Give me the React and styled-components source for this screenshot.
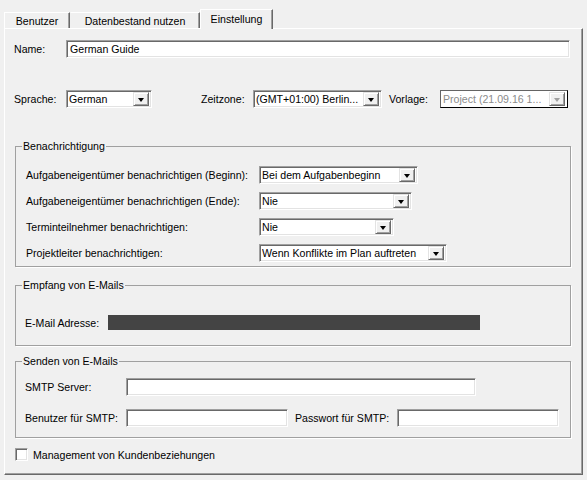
import React from 'react';
import styled, { createGlobalStyle } from 'styled-components';

const GlobalStyle = createGlobalStyle`
  body {
    margin: 0;
    background: #f0f0f0;
    font-family: "Liberation Sans", Arial, sans-serif;
    font-size: 10.6px;
    color: #000;
  }
`;

const Window = styled.div`
  width: 587px;
  height: 480px;
  padding: 9px 0 0 4px;
  box-sizing: border-box;
`;

const TabBar = styled.div`
  display: flex;
  align-items: flex-end;
  height: 19px;
`;

const Tab = styled.div`
  position: relative;
  z-index: 1;
  box-sizing: border-box;
  width: ${p => p.width}px;
  height: ${p => (p.active ? 20 : 16)}px;
  margin-bottom: ${p => (p.active ? -1 : 0)}px;
  padding-top: ${p => (p.active ? 3 : 2)}px;
  text-align: center;
  background: #f0f0f0;
  border-top: 1px solid #fff;
  border-left: 1px solid ${p => (p.active || p.first ? '#fff' : 'transparent')};
  border-right: 1px solid #696969;
  box-shadow: inset -1px 0 #a0a0a0;
  line-height: 13px;
`;

const Panel = styled.div`
  box-sizing: border-box;
  width: 579px;
  height: 447px;
  border-top: 1px solid #fff;
  border-left: 1px solid #fff;
  border-right: 1px solid #696969;
  border-bottom: 1px solid #696969;
  box-shadow: inset -1px -1px #a0a0a0;
  display: flex;
  flex-direction: column;
`;

const Row = styled.div`
  display: flex;
  align-items: center;
  height: ${p => p.h || 18}px;
  margin-top: ${p => p.mt || 0}px;
  padding-left: ${p => p.pl || 0}px;
`;

const Label = styled.span`
  width: ${p => p.w}px;
  margin-left: ${p => p.ml || 0}px;
  flex: none;
  white-space: nowrap;
`;

const TextInput = styled.div`
  box-sizing: border-box;
  width: ${p => p.w}px;
  height: 18px;
  background: #fff;
  border: 1px solid;
  border-color: #a0a0a0 #fff #fff #a0a0a0;
  box-shadow: inset 1px 1px #696969, inset -1px -1px #e3e3e3;
  padding: 2px 3px 0;
  line-height: 13px;
  flex: none;
`;

const SelectBox = styled.div`
  box-sizing: border-box;
  width: ${p => p.w}px;
  height: 18px;
  margin-left: ${p => p.ml || 0}px;
  flex: none;
  display: flex;
  align-items: center;
  background: #fff;
  border: 1px solid;
  border-color: ${p => (p.disabled ? '#646464 #000 #000 #646464' : '#a0a0a0 #fff #fff #a0a0a0')};
  box-shadow: ${p => (p.disabled ? 'none' : 'inset 1px 1px #696969, inset -1px -1px #e3e3e3')};
  padding: 1px 1px 1px 2px;
  color: ${p => (p.disabled ? '#8c8c8c' : '#000')};
`;

const SelectText = styled.span`
  flex: 1;
  overflow: hidden;
  white-space: nowrap;
  line-height: 13px;
`;

const DropButton = styled.span`
  box-sizing: border-box;
  width: 16px;
  height: 14px;
  margin-right: 1px;
  flex: none;
  display: flex;
  align-items: center;
  justify-content: center;
  background: #f0f0f0;
  border: 1px solid;
  border-color: #e3e3e3 #696969 #696969 #e3e3e3;
  box-shadow: inset 1px 1px #fff, inset -1px -1px #a0a0a0;

  &::after {
    content: '';
    margin-top: 1px;
    border-left: 3.5px solid transparent;
    border-right: 3.5px solid transparent;
    border-top: 4px solid ${p => (p.disabled ? '#a0a0a0' : '#000')};
  }
`;

const Group = styled.fieldset`
  box-sizing: border-box;
  width: 556px;
  margin: ${p => p.mt}px 0 0 10px;
  padding: 0 0 ${p => p.pb}px 0;
  min-width: 0;
  border: 1px solid #a0a0a0;
  box-shadow: 1px 1px #fff;
`;

const Legend = styled.legend`
  margin-left: 6px;
  padding: 0 1px;
  line-height: 13px;
`;

const Redacted = styled.div`
  width: 372px;
  height: 15px;
  background: #444;
`;

const CheckRow = styled.label`
  display: flex;
  align-items: center;
  gap: 5px;
  margin: ${p => p.mt}px 0 0 10px;
  height: 13px;
`;

const CheckBox = styled.span`
  box-sizing: border-box;
  width: 13px;
  height: 13px;
  background: #fff;
  border: 1px solid;
  border-color: #a0a0a0 #fff #fff #a0a0a0;
  box-shadow: inset 1px 1px #696969, inset -1px -1px #e3e3e3;
`;

const Select = ({ w, ml, disabled, children }) => (
  <SelectBox w={w} ml={ml} disabled={disabled}>
    <SelectText>{children}</SelectText>
    <DropButton disabled={disabled} />
  </SelectBox>
);

const notifyRows = [
  ['Aufgabeneigentümer benachrichtigen (Beginn):', 'Bei dem Aufgabenbeginn', 159],
  ['Aufgabeneigentümer benachrichtigen (Ende):', 'Nie', 153],
  ['Terminteilnehmer benachrichtigen:', 'Nie', 135],
  ['Projektleiter benachrichtigen:', 'Wenn Konflikte im Plan auftreten', 188],
];

export default function App() {
  return (
    <Window>
      <GlobalStyle />
      <TabBar>
        <Tab width={66} first>Benutzer</Tab>
        <Tab width={130}>Datenbestand nutzen</Tab>
        <Tab width={73} active>Einstellung</Tab>
      </TabBar>
      <Panel>
        <Row mt={11} pl={9}>
          <Label w={52}>Name:</Label>
          <TextInput w={504}>German Guide</TextInput>
        </Row>

        <Row mt={32} pl={9}>
          <Label w={52}>Sprache:</Label>
          <Select w={86}>German</Select>
          <Label w={52} ml={49}>Zeitzone:</Label>
          <Select w={129}>(GMT+01:00) Berlin...</Select>
          <Label w={51} ml={7}>Vorlage:</Label>
          <Select w={128} disabled>Project (21.09.16 1...</Select>
        </Row>

        <Group mt={32} pb={4}>
          <Legend>Benachrichtigung</Legend>
          {notifyRows.map(([label, value, w], i) => (
            <Row key={label} mt={i === 0 ? 13 : 8} pl={10}>
              <Label w={233}>{label}</Label>
              <Select w={w}>{value}</Select>
            </Row>
          ))}
        </Group>

        <Group mt={12} pb={15}>
          <Legend>Empfang von E-Mails</Legend>
          <Row mt={23} h={15} pl={9}>
            <Label w={83}>E-Mail Adresse:</Label>
            <Redacted />
          </Row>
        </Group>

        <Group mt={9} pb={10}>
          <Legend>Senden von E-Mails</Legend>
          <Row mt={10} pl={9}>
            <Label w={101}>SMTP Server:</Label>
            <TextInput w={350} />
          </Row>
          <Row mt={13} pl={9}>
            <Label w={101}>Benutzer für SMTP:</Label>
            <TextInput w={162} />
            <Label w={102} ml={7}>Passwort für SMTP:</Label>
            <TextInput w={162} />
          </Row>
        </Group>

        <CheckRow mt={10}>
          <CheckBox />
          Management von Kundenbeziehungen
        </CheckRow>
      </Panel>
    </Window>
  );
}
